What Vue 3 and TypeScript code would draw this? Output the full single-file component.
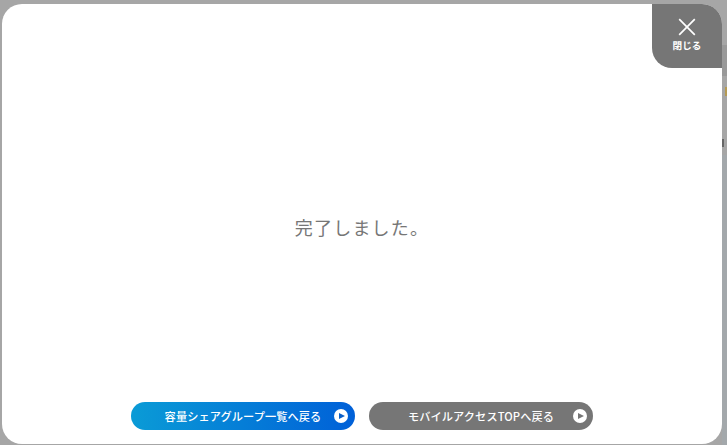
<script setup lang="ts">
const actions = [
  { label: '容量シェアグループ一覧へ戻る', kind: 'blue' },
  { label: 'モバイルアクセスTOPへ戻る', kind: 'gray' },
]
</script>

<template>
  <div class="backdrop">
    <div class="edge">
      <span class="edge-band"></span>
      <span class="edge-mark"></span>
      <span class="edge-dark"></span>
      <span class="edge-foot"></span>
    </div>
    <section class="modal">
      <button class="close" type="button">
        <svg class="close-icon" viewBox="0 0 18 18" width="18" height="18" aria-hidden="true">
          <path d="M1.2 1.2 16.8 16.8M16.8 1.2 1.2 16.8" fill="none" stroke="#fff" stroke-width="1.7" />
        </svg>
        <span class="close-label">閉じる</span>
      </button>
      <p class="message">完了しました。</p>
      <div class="actions">
        <a v-for="a in actions" :key="a.label" class="action" :class="a.kind" href="#">
          <span class="action-label">{{ a.label }}</span>
          <span class="play"><span class="tri"></span></span>
        </a>
      </div>
    </section>
  </div>
</template>

<style>
html, body { margin: 0; padding: 0; background: #a6a6a6; }
</style>

<style scoped>
.backdrop {
  width: 727px;
  height: 445px;
  box-sizing: border-box;
  padding: 4px 5px 1px 2px;
  background: #a6a6a6;
  position: relative;
  overflow: hidden;
  font-family: "Noto Sans CJK JP", "Noto Sans", sans-serif;
}
.edge { position: absolute; top: 0; right: 0; width: 5px; height: 100%; }
.edge-band { position: absolute; top: 45px; left: 0; width: 5px; height: 31px; background: #999; }
.edge-mark { position: absolute; top: 87px; left: 3px; width: 2px; height: 9px; background: #b59a52; }
.edge-dark { position: absolute; top: 139px; left: 0; width: 2px; height: 8px; background: #666; }
.edge-foot { position: absolute; top: 155px; left: 0; width: 5px; height: 290px; background: #a3a8ab; }
.modal {
  position: relative;
  width: 720px;
  height: 440px;
  background: #fff;
  border-radius: 20px;
  display: flex;
  flex-direction: column;
  align-items: center;
}
.close {
  position: absolute;
  top: 0;
  right: 0;
  width: 70px;
  height: 64px;
  border: 0;
  padding: 14px 0 0;
  background: #767676;
  border-radius: 0 20px 0 20px;
  color: #fff;
  display: flex;
  flex-direction: column;
  align-items: center;
  font-family: inherit;
}
.close-icon { display: block; }
.close-label { font-size: 9.6px; line-height: 14px; font-weight: 700; margin-top: 2px; }
.message {
  margin: 0;
  flex: 1;
  display: flex;
  align-items: center;
  padding-top: 48px;
  font-size: 18px;
  letter-spacing: 1.2px;
  color: #767676;
}
.actions { display: flex; gap: 14px; margin-bottom: 14px; }
.action {
  position: relative;
  width: 224px;
  height: 28px;
  border-radius: 14px;
  display: flex;
  align-items: center;
  justify-content: center;
  color: #fff;
  text-decoration: none;
  font-size: 11.2px;
  font-weight: 500;
  letter-spacing: 0.1px;
}
.blue { background: linear-gradient(90deg, #0a9bd6, #0060d8); }
.gray { background: #767676; }
.play {
  position: absolute;
  right: 7px;
  top: 7px;
  width: 14px;
  height: 14px;
  border-radius: 50%;
  background: #fff;
  display: flex;
  align-items: center;
  justify-content: center;
}
.gray .play { right: 6px; }
.tri {
  width: 0;
  height: 0;
  margin-left: 2px;
  border-left: 6px solid #0a5fc8;
  border-top: 3.5px solid transparent;
  border-bottom: 3.5px solid transparent;
}
.gray .tri { border-left-color: #767676; }
</style>
